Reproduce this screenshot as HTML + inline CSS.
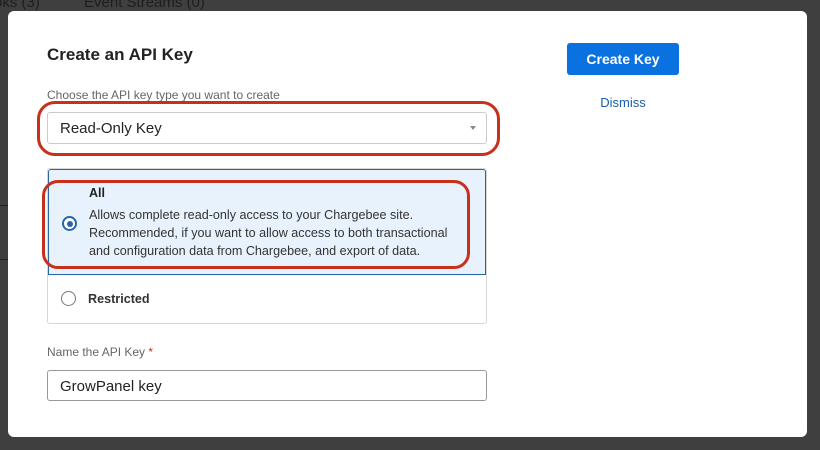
<!DOCTYPE html>
<html><head><meta charset="utf-8"><style>
*{box-sizing:border-box;margin:0;padding:0}
body{width:820px;height:450px;overflow:hidden;background:#3f3f40;font-family:"Liberation Sans",sans-serif;position:relative}
.bg{position:absolute;color:#1e1e1e;font-size:15px}
.modal{position:absolute;left:8px;top:11px;width:799px;height:426px;background:#fff;border-radius:6px}
.abs{position:absolute}
.title{left:39px;top:34px;font-size:17px;color:#222;font-weight:600}
.lbl{font-size:12px;color:#666}
.sel{left:39px;top:101px;width:440px;height:32px;border:1px solid #ccc;border-radius:3px;font-size:15px;color:#222;padding:7px 12px}
.caret{right:10px;top:13px;width:0;height:0;border-left:3px solid transparent;border-right:3px solid transparent;border-top:4px solid #888}
.ring{border:3px solid #c9301c;border-radius:16px}
.opts{left:39px;top:157px;width:440px;height:156px;border:1px solid #d6d6d6;border-radius:3px;overflow:hidden}
.o1{left:0;top:0;width:438px;height:106px;background:#e8f2fd;border:1px solid #2a65a8;border-radius:3px 3px 0 0}
.radio{width:15px;height:15px;border-radius:50%;border:1.5px solid #777;background:#fff}
.btn{left:559px;top:32px;width:112px;height:32px;background:#0a72e0;border-radius:3px;color:#fff;font-size:14px;font-weight:bold;text-align:center;line-height:32px}
</style></head><body>
<div class="bg" style="left:-6px;top:-6px">oks (3)</div>
<div class="bg" style="left:84px;top:-6px">Event Streams (0)</div>
<div class="abs" style="left:0;top:205px;width:8px;height:1px;background:#222"></div>
<div class="abs" style="left:0;top:259px;width:8px;height:1px;background:#222"></div>
<div class="modal">
<div class="abs title">Create an API Key</div>
<div class="abs lbl" style="left:39px;top:77px">Choose the API key type you want to create</div>
<div class="abs sel">Read-Only Key<div class="abs caret"></div></div>
<div class="abs ring" style="left:29px;top:90px;width:463px;height:55px;border-radius:18px"></div>
<div class="abs opts">
 <div class="abs o1">
  <div class="abs radio" style="left:13px;top:46px;border-color:#2a65a8;border-width:2px"><div style="position:absolute;left:2.5px;top:2.5px;width:6px;height:6px;border-radius:50%;background:#2a65a8"></div></div>
  <div class="abs" style="left:40px;top:16px;font-size:12.5px;font-weight:bold;color:#222">All</div>
  <div class="abs" style="left:40px;top:36px;font-size:12.6px;color:#333;line-height:18px;white-space:nowrap">Allows complete read-only access to your Chargebee site.<br>Recommended, if you want to allow access to both transactional<br>and configuration data from Chargebee, and export of data.</div>
 </div>
 <div class="abs radio" style="left:13px;top:122px"></div>
 <div class="abs" style="left:40px;top:123px;font-size:12.6px;font-weight:bold;color:#333">Restricted</div>
</div>
<div class="abs ring" style="left:34px;top:169px;width:428px;height:89px"></div>
<div class="abs lbl" style="left:39px;top:334px">Name the API Key <span style="color:#c9301c">*</span></div>
<div class="abs sel" style="top:359px;height:31px;border-color:#999">GrowPanel key</div>
<div class="abs btn">Create Key</div>
<div class="abs" style="left:559px;top:84px;width:112px;text-align:center;font-size:13px;color:#1d5fa5">Dismiss</div>
</div>
</body></html>
